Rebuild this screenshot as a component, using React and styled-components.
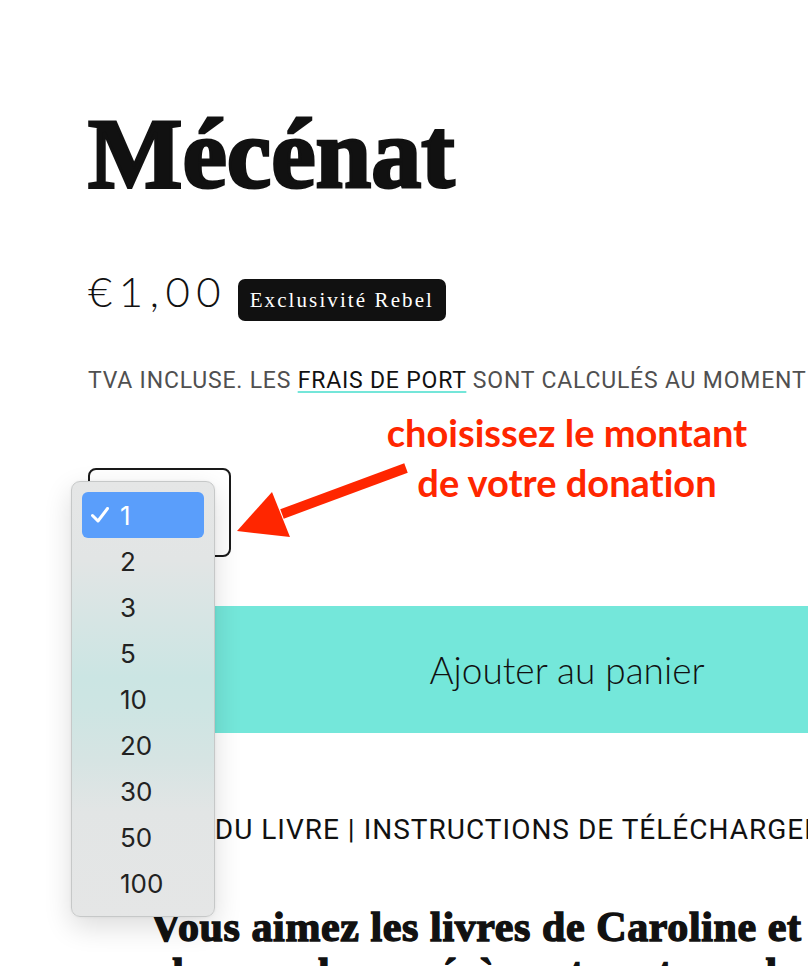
import React from 'react';
import styled, { createGlobalStyle } from 'styled-components';

const GlobalStyle = createGlobalStyle`
  html, body {
    margin: 0;
    padding: 0;
    background: #ffffff;
    overflow: hidden;
  }
`;

const Page = styled.div`
  position: relative;
  width: 1200px;
  height: 966px;
  overflow: hidden;
`;

const Column = styled.main`
  width: 958px;
  margin-left: 88px;
  padding-top: 94px;
`;

const Title = styled.h1`
  margin: 0;
  font-family: "Liberation Serif", "DejaVu Serif", serif;
  font-weight: 700;
  font-size: 100px;
  line-height: 120px;
  letter-spacing: 0;
  color: #111111;
  -webkit-text-stroke: 3px #111111;
`;

const PriceRow = styled.div`
  display: flex;
  align-items: center;
  gap: 17px;
  margin-top: 59px;
`;

const Price = styled.span`
  font-family: "Lato", "Noto Sans", sans-serif;
  font-weight: 300;
  font-size: 42px;
  line-height: 36px;
  padding-bottom: 18px;
  letter-spacing: 6.5px;
  margin-right: -6.5px;
  color: #111111;
`;

const Badge = styled.span`
  display: inline-flex;
  align-items: center;
  height: 42px;
  padding: 0 12px;
  border-radius: 7px;
  background: #111111;
  color: #ffffff;
  font-family: "Liberation Serif", "DejaVu Serif", serif;
  font-size: 21px;
  letter-spacing: 2.1px;
`;

const TaxNote = styled.p`
  margin: 40px 0 0;
  font-family: "Roboto", "Liberation Sans", sans-serif;
  font-size: 23px;
  line-height: 28px;
  letter-spacing: 0.8px;
  color: #505050;
  white-space: nowrap;
`;

const ShippingLink = styled.a`
  color: #111111;
  text-decoration: underline;
  text-decoration-color: #74e6d9;
  text-decoration-thickness: 2px;
  text-underline-offset: 3px;
`;

const QuantityBox = styled.div`
  width: 143px;
  height: 89px;
  margin-top: 73px;
  box-sizing: border-box;
  border: 2px solid #1a1a1a;
  border-radius: 8px;
`;

const CartButton = styled.button`
  display: flex;
  align-items: center;
  justify-content: center;
  width: 958px;
  height: 127px;
  margin-top: 49px;
  border: none;
  background: #74e7da;
  font-family: "Lato", "Noto Sans", sans-serif;
  font-weight: 300;
  font-size: 37px;
  color: #111111;
`;

const Tabs = styled.nav`
  margin-top: 80px;
  font-family: "Roboto", "Liberation Sans", sans-serif;
  font-size: 28px;
  line-height: 34px;
  letter-spacing: 1px;
  color: #111111;
  white-space: nowrap;
`;

const Heading = styled.h2`
  margin: 57px 0 0;
  font-family: "Liberation Serif", "DejaVu Serif", serif;
  font-weight: 700;
  font-size: 42px;
  line-height: 46px;
  letter-spacing: 0.6px;
  text-align: center;
  color: #111111;
  white-space: nowrap;
  -webkit-text-stroke: 1.4px #111111;
`;

const Annotation = styled.div`
  position: absolute;
  left: 317px;
  top: 407px;
  width: 500px;
  text-align: center;
  font-family: "Lato", "Open Sans", sans-serif;
  font-weight: 700;
  font-size: 38px;
  line-height: 50px;
  font-variant-ligatures: none;
  color: #ff2600;
`;

const Arrow = styled.svg`
  position: absolute;
  left: 230px;
  top: 455px;
`;

const Menu = styled.ul`
  position: absolute;
  left: 71px;
  top: 481px;
  width: 144px;
  margin: 0;
  padding: 10px;
  box-sizing: border-box;
  list-style: none;
  border: 1px solid #c6c8c8;
  border-radius: 9px;
  background: linear-gradient(
    to bottom,
    #e5e6e6 0%,
    #e2e5e5 18%,
    #d6e5e4 32%,
    #cbe5e3 45%,
    #cde5e3 52%,
    #d6e4e3 64%,
    #e2e5e5 76%,
    #e5e6e6 100%
  );
  box-shadow: 0 10px 28px rgba(0, 0, 0, 0.14), 0 0 3px rgba(0, 0, 0, 0.06);
`;

const MenuItem = styled.li`
  display: flex;
  align-items: center;
  height: 46px;
  padding-left: 9px;
  border-radius: 6px;
  background: ${p => (p.$selected ? '#5a9efb' : 'transparent')};
  color: ${p => (p.$selected ? '#ffffff' : '#222222')};
  font-family: "Inter", "Noto Sans", sans-serif;
  font-size: 26px;
`;

const CheckSlot = styled.span`
  display: inline-flex;
  width: 29px;
`;

const amounts = [1, 2, 3, 5, 10, 20, 30, 50, 100];

export default function App() {
  return (
    <>
      <GlobalStyle />
      <Page>
        <Column>
          <Title>Mécénat</Title>

          <PriceRow>
            <Price>€1,00</Price>
            <Badge>Exclusivité Rebel</Badge>
          </PriceRow>

          <TaxNote>
            TVA INCLUSE. LES <ShippingLink>FRAIS DE PORT</ShippingLink> SONT CALCULÉS AU MOMENT DU PAIEMENT.
          </TaxNote>

          <QuantityBox />

          <CartButton>Ajouter au panier</CartButton>

          <Tabs>L'ESPRIT DU LIVRE | INSTRUCTIONS DE TÉLÉCHARGEMENT</Tabs>

          <Heading>
            Vous aimez les livres de Caroline et Juliette ?
            <br />
            devenez leur mécène et soutenez leur travail
          </Heading>
        </Column>

        <Annotation>
          choisissez le montant
          <br />
          de votre donation
        </Annotation>

        <Arrow width="185" height="90" viewBox="0 0 185 90">
          <line x1="176" y1="13" x2="52" y2="59" stroke="#ff2600" strokeWidth="10" />
          <polygon points="7,76 42,37 60,82" fill="#ff2600" />
        </Arrow>

        <Menu>
          {amounts.map(n => (
            <MenuItem key={n} $selected={n === 1}>
              <CheckSlot>
                {n === 1 && (
                  <svg width="18" height="16" viewBox="0 0 18 16">
                    <polyline
                      points="1.5,8.5 7,14 16.5,1.5"
                      fill="none"
                      stroke="#ffffff"
                      strokeWidth="3"
                      strokeLinecap="round"
                      strokeLinejoin="round"
                    />
                  </svg>
                )}
              </CheckSlot>
              {n}
            </MenuItem>
          ))}
        </Menu>
      </Page>
    </>
  );
}
